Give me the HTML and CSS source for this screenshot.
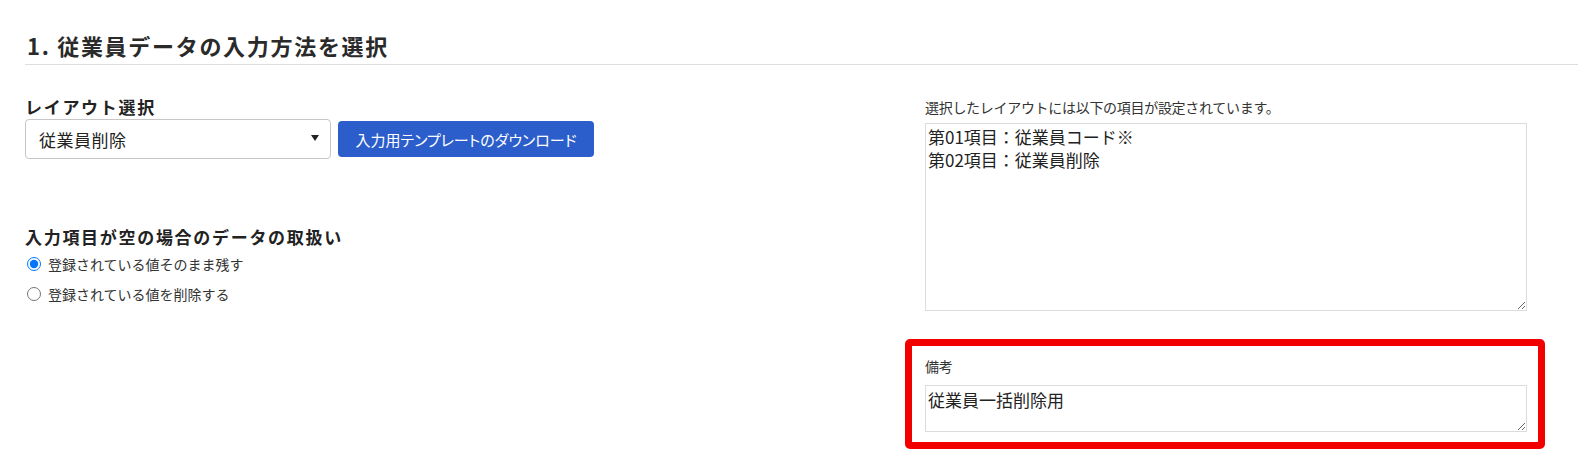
FILE: index.html
```html
<!DOCTYPE html>
<html lang="ja">
<head>
<meta charset="utf-8">
<title>従業員データの入力方法を選択</title>
<link rel="stylesheet" href="styles.css">
</head>
<body>
<section class="page">
  <h2 class="section-title">1. 従業員データの入力方法を選択</h2>
  <div class="content">
    <div class="left">
      <div class="field-label">レイアウト選択</div>
      <div class="layout-row">
        <div class="select-wrap">
          <select class="select">
            <option>従業員削除</option>
          </select>
        </div>
        <button class="btn" type="button">入力用テンプレートのダウンロード</button>
      </div>
      <div class="field-label empty-title">入力項目が空の場合のデータの取扱い</div>
      <div class="radios">
        <label class="radio-row"><input type="radio" name="empty" checked><span>登録されている値そのまま残す</span></label>
        <label class="radio-row"><input type="radio" name="empty"><span>登録されている値を削除する</span></label>
      </div>
    </div>
    <div class="right">
      <div class="items">
        <div class="note">選択したレイアウトには以下の項目が設定されています。</div>
        <textarea class="ta ta-items" readonly>第01項目：従業員コード※
第02項目：従業員削除</textarea>
      </div>
      <div class="remark-box">
        <div class="note">備考</div>
        <textarea class="ta ta-remark">従業員一括削除用</textarea>
      </div>
    </div>
  </div>
</section>
</body>
</html>
```
FILE: styles.css
```css
html, body {
  margin: 0;
  padding: 0;
  background: #ffffff;
}
body {
  font-family: "Noto Sans CJK JP", "Noto Sans", sans-serif;
  color: #222222;
  width: 1578px;
  height: 467px;
  overflow: hidden;
}
.page {
  padding-top: 30px;
}
.section-title {
  margin: 0 0 0 25px;
  padding: 0 0 4px 2px;
  font-size: 22px;
  line-height: 30px;
  font-weight: 700;
  letter-spacing: 1.7px;
  color: #2a2a2a;
  border-bottom: 1px solid #dddddd;
}
.content {
  display: grid;
  grid-template-columns: 880px 640px;
  margin-top: 32px;
  padding-left: 25px;
}
.field-label {
  font-size: 17px;
  line-height: 20px;
  font-weight: 700;
  letter-spacing: 1.7px;
  color: #222222;
}
.layout-row {
  display: flex;
  align-items: center;
  gap: 7px;
  margin-top: 2px;
}
.select-wrap {
  position: relative;
  width: 306px;
  height: 40px;
}
.select-wrap::after {
  content: "";
  position: absolute;
  right: 12px;
  top: 16px;
  border-left: 4.5px solid transparent;
  border-right: 4.5px solid transparent;
  border-top: 6px solid #222222;
  pointer-events: none;
}
.select {
  appearance: none;
  -webkit-appearance: none;
  width: 100%;
  height: 100%;
  box-sizing: border-box;
  border: 1px solid #c6c6c6;
  border-radius: 4px;
  background: #ffffff;
  padding: 0 30px 0 13px;
  font-family: inherit;
  font-size: 17px;
  letter-spacing: 0.5px;
  color: #222222;
}
.btn {
  height: 36px;
  box-sizing: border-box;
  border: none;
  border-radius: 4px;
  background: #2b5ecb;
  color: #ffffff;
  font-family: inherit;
  font-size: 15px;
  font-feature-settings: "palt";
  white-space: nowrap;
  padding: 0 12px;
  width: 256px;
  cursor: pointer;
}
.empty-title {
  margin-top: 66px;
  line-height: 24px;
}
.radios {
  display: flex;
  flex-direction: column;
  gap: 6px;
  margin-top: 3px;
}
.radio-row {
  display: flex;
  align-items: center;
  height: 24px;
  font-size: 14px;
  color: #333333;
}
.radio-row input {
  width: 14px;
  height: 14px;
  margin: 0 7px 0 2px;
  accent-color: #0075ff;
}
.right {
  display: flex;
  flex-direction: column;
}
.items {
  padding: 0 18px 0 20px;
}
.note {
  font-size: 14px;
  line-height: 20px;
  color: #333333;
  letter-spacing: -0.3px;
}
.items .note {
  margin-bottom: 6px;
}
.ta {
  display: block;
  width: 100%;
  box-sizing: border-box;
  border: 1px solid #dcdcdc;
  padding: 1px 2px;
  font-family: inherit;
  font-size: 17px;
  line-height: 23px;
  color: #222222;
  resize: vertical;
  outline: none;
}
.ta-items {
  height: 188px;
}
.remark-box {
  margin-top: 28px;
  border: 7px solid #f20000;
  border-radius: 5px;
  padding: 10px 11px 10px 13px;
}
.remark-box .note {
  margin-bottom: 9px;
}
.ta-remark {
  height: 47px;
  padding-top: 2px;
}
```
